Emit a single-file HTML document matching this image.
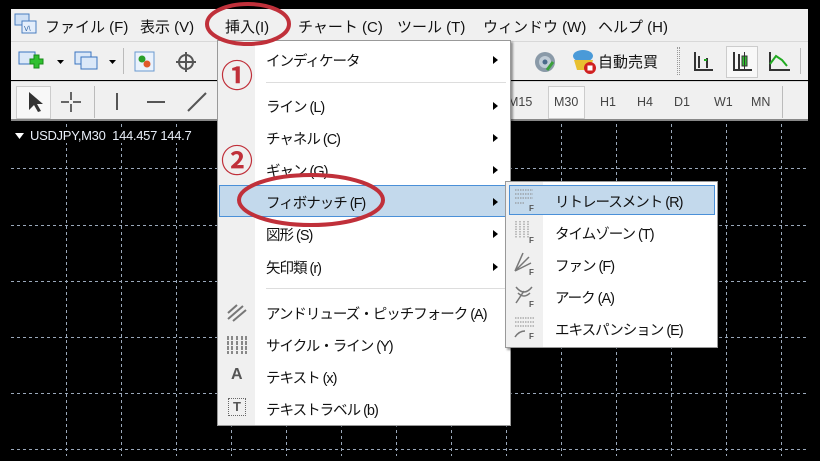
<!DOCTYPE html>
<html><head><meta charset="utf-8">
<style>
*{margin:0;padding:0;box-sizing:border-box}
body{width:820px;height:461px;background:#000;position:relative;overflow:hidden;font-family:"Liberation Sans","Noto Sans CJK JP",sans-serif;color:#111}
.a{position:absolute}
.mb{left:11px;top:9px;width:797px;height:32px;background:#f0f0f0}
.mb span{position:absolute;top:7px;font-size:15px}
.tb{left:11px;width:797px;background:#f0f0f0;border-top:1px solid #d8d8d8}
.chart{left:11px;top:124px;width:797px;height:332px;background:#000;overflow:hidden}
.menu{left:217px;top:40px;width:294px;height:386px;background:#fff;border:1px solid #999;box-shadow:2px 2px 2px rgba(0,0,0,.4)}
.col{left:0;top:0;width:37px;height:100%;background:#f0f0f0}
.it{position:absolute;left:48px;font-size:14.5px;letter-spacing:-1px;white-space:nowrap}
.ar{position:absolute;left:275px;width:0;height:0;border-left:5px solid #000;border-top:4px solid transparent;border-bottom:4px solid transparent}
.hl{position:absolute;background:#c3d9ec;border:1px solid #4a90d8}
.sub{left:505px;top:181px;width:213px;height:167px;background:#fff;border:1px solid #999;box-shadow:2px 2px 2px rgba(0,0,0,.4)}
.si{position:absolute;left:49px;font-size:14.5px;letter-spacing:-1px;white-space:nowrap}
.tf{position:absolute;top:95px;font-size:12.5px;color:#444}
.num{position:absolute;font-size:32px;color:#c0303a;font-weight:bold;line-height:1}
</style></head><body>
<div class="a mb">
<svg class="a" style="left:3px;top:3px" width="26" height="24"><rect x="1" y="2" width="14" height="11" fill="#cfe0f5" stroke="#4a7ec0"/><rect x="8" y="9" width="14" height="12" fill="#e4eefb" stroke="#4a7ec0"/><text x="10" y="19" font-size="7" fill="#2a5fa0">V\</text></svg>
<span style="left:34px">ファイル (F)</span>
<span style="left:129px">表示 (V)</span>
<span style="left:214px">挿入(I)</span>
<span style="left:287px">チャート (C)</span>
<span style="left:386px">ツール (T)</span>
<span style="left:472px">ウィンドウ (W)</span>
<span style="left:587px">ヘルプ (H)</span>
</div>
<div class="a tb" style="top:41px;height:39px">
<svg class="a" style="left:6px;top:8px" width="50" height="24"><rect x="2" y="2" width="16" height="12" fill="#dbe8f8" stroke="#3a74c0"/><path d="M13 9h4V5h5v4h4v5h-4v4h-5v-4h-4z" fill="#2fc02f" stroke="#178a17"/><path d="M40 10h7l-3.5 4z" fill="#000"/></svg>
<svg class="a" style="left:62px;top:8px" width="50" height="24"><rect x="2" y="2" width="16" height="12" fill="#dbe8f8" stroke="#3a74c0"/><rect x="8" y="7" width="16" height="12" fill="#dbe8f8" stroke="#3a74c0"/><path d="M36 10h7l-3.5 4z" fill="#000"/></svg>
<div class="a" style="left:112px;top:6px;width:1px;height:26px;background:#bbb"></div>
<svg class="a" style="left:122px;top:8px" width="24" height="24"><rect x="2" y="2" width="19" height="19" fill="#eaf2fc" stroke="#6a9ad0"/><circle cx="9" cy="9" r="3.5" fill="#2aa02a"/><circle cx="14" cy="14" r="3.5" fill="#e05a2a"/></svg>
<svg class="a" style="left:163px;top:8px" width="24" height="24"><circle cx="12" cy="12" r="7" fill="none" stroke="#555" stroke-width="2"/><path d="M12 2v20M2 12h20" stroke="#555" stroke-width="2"/></svg>
<svg class="a" style="left:522px;top:8px" width="24" height="24"><circle cx="12" cy="12" r="10" fill="#8a9aa8"/><circle cx="12" cy="12" r="6" fill="#c0ccd6"/><circle cx="12" cy="12" r="2.5" fill="#4a6a8a"/><path d="M14 20l6-8" stroke="#3aa03a" stroke-width="3"/></svg>
<svg class="a" style="left:560px;top:6px" width="26" height="28"><ellipse cx="12" cy="8" rx="10" ry="6" fill="#4a9ad8"/><path d="M3 12h19l-3 10H6z" fill="#e8c030"/><circle cx="19" cy="20" r="6" fill="#d02020"/><rect x="16.5" y="17.5" width="5" height="5" fill="#fff"/></svg>
<span class="a" style="left:587px;top:9px;font-size:15px">自動売買</span>
<div class="a" style="left:666px;top:5px;width:3px;height:28px;border-left:1px dotted #999;border-right:1px dotted #999"></div>
<svg class="a" style="left:680px;top:8px" width="24" height="24"><path d="M4 2v18h18M8 6v12M16 8v10" stroke="#333" stroke-width="2" fill="none"/><path d="M16 10h-3" stroke="#2a2" stroke-width="2"/></svg>
<div class="a" style="left:715px;top:4px;width:32px;height:32px;background:#f8f8f8;border:1px solid #ccc"></div>
<svg class="a" style="left:719px;top:8px" width="24" height="24"><path d="M4 2v18h18M9 4v16" stroke="#333" stroke-width="2" fill="none"/><rect x="12" y="6" width="5" height="10" fill="#2fc02f" stroke="#333"/><path d="M14.5 2v18" stroke="#333"/></svg>
<svg class="a" style="left:755px;top:8px" width="26" height="24"><path d="M4 2v18h20" stroke="#333" stroke-width="2" fill="none"/><path d="M4 14l6-8 6 4 5 6" stroke="#2a2" stroke-width="2" fill="none"/></svg>
<div class="a" style="left:789px;top:6px;width:1px;height:26px;background:#bbb"></div>
</div>
<div class="a tb" style="top:81px;height:40px;border-bottom:2px solid #888">
<div class="a" style="left:5px;top:4px;width:35px;height:33px;background:#f8f8f8;border:1px solid #ccc"></div>
<svg class="a" style="left:12px;top:8px" width="24" height="24"><path d="M6 2v18l5-5 4 7 3-1-4-7h6z" fill="#333"/></svg>
<svg class="a" style="left:48px;top:8px" width="24" height="24"><path d="M12 2v8M12 14v8M2 12h8M14 12h8" stroke="#666" stroke-width="2"/></svg>
<div class="a" style="left:83px;top:4px;width:1px;height:32px;background:#bbb"></div>
<div class="a" style="left:105px;top:11px;width:2px;height:17px;background:#555"></div>
<div class="a" style="left:136px;top:19px;width:18px;height:2px;background:#555"></div>
<svg class="a" style="left:174px;top:8px" width="24" height="24"><path d="M3 21L21 3" stroke="#555" stroke-width="2"/></svg>
<span class="tf" style="left:497px;top:13px">M15</span>
<div class="a" style="left:537px;top:4px;width:37px;height:33px;background:#f8f8f8;border:1px solid #ccc"></div>
<span class="tf" style="left:543px;top:13px">M30</span>
<span class="tf" style="left:589px;top:13px">H1</span>
<span class="tf" style="left:626px;top:13px">H4</span>
<span class="tf" style="left:663px;top:13px">D1</span>
<span class="tf" style="left:703px;top:13px">W1</span>
<span class="tf" style="left:740px;top:13px">MN</span>
<div class="a" style="left:771px;top:4px;width:1px;height:32px;background:#bbb"></div>
</div>
<div class="a chart">
<svg width="797" height="332" style="position:absolute;left:0;top:0">
<g stroke="#9aa8ba" stroke-width="1" stroke-dasharray="3,3">
<path d="M0 44.5H797M0 101.5H797M0 157.5H797M0 213.5H797M0 269.5H797M0 325.5H797"/>
<path d="M55.5 0V332M110.5 0V332M165.5 0V332M220.5 0V332M275.5 0V332M330.5 0V332M385.5 0V332M440.5 0V332M495.5 0V332M550.5 0V332M605.5 0V332M660.5 0V332M715.5 0V332M770.5 0V332"/>
</g>
</svg>
<svg class="a" style="left:4px;top:8px" width="10" height="8"><path d="M0 1h9L4.5 7z" fill="#fff"/></svg>
<span class="a" style="left:19px;top:4px;font-size:13px;letter-spacing:-0.3px;color:#e8eef8;background:#000">USDJPY,M30 &nbsp;144.457 144.7</span>
</div>
<div class="a menu">
<div class="a col"></div>
<div class="it" style="top:9px">インディケータ</div><div class="ar" style="top:15px"></div>
<div class="a" style="left:48px;top:41px;width:240px;height:1px;background:#ddd"></div>
<div class="it" style="top:55px">ライン (L)</div><div class="ar" style="top:61px"></div>
<div class="it" style="top:87px">チャネル (C)</div><div class="ar" style="top:93px"></div>
<div class="it" style="top:119px">ギャン (G)</div><div class="ar" style="top:125px"></div>
<div class="hl" style="left:1px;top:144px;width:290px;height:32px"></div>
<div class="it" style="top:151px">フィボナッチ (F)</div><div class="ar" style="top:157px"></div>
<div class="it" style="top:183px">図形 (S)</div><div class="ar" style="top:189px"></div>
<div class="it" style="top:216px">矢印類 (r)</div><div class="ar" style="top:222px"></div>
<div class="a" style="left:48px;top:247px;width:240px;height:1px;background:#ddd"></div>
<svg class="a" style="left:8px;top:262px" width="22" height="20"><path d="M2 10L11 2M2 16L17 3M7 18L20 7" stroke="#777" stroke-width="2"/></svg>
<div class="it" style="top:262px">アンドリューズ・ピッチフォーク (A)</div>
<svg class="a" style="left:8px;top:294px" width="22" height="20"><path d="M2 1v18M6 1v18M11 1v18M16 1v18M20 1v18" stroke="#666" stroke-width="1.5" stroke-dasharray="4,1"/></svg>
<div class="it" style="top:294px">サイクル・ライン (Y)</div>
<div class="a" style="left:13px;top:325px;font-size:16px;font-weight:bold;color:#555">A</div>
<div class="it" style="top:326px">テキスト (x)</div>
<div class="a" style="left:10px;top:357px;width:18px;height:18px;border:1px dotted #666;font-size:13px;font-weight:bold;color:#555;text-align:center;line-height:16px">T</div>
<div class="it" style="top:358px">テキストラベル (b)</div>
</div>
<div class="a sub">
<div class="a col" style="width:37px"></div>
<div class="hl" style="left:3px;top:3px;width:206px;height:30px"></div>
<svg class="a" style="left:7px;top:5px" width="26" height="26"><path d="M2 3h18M2 7h18M2 11h18M2 16h10" stroke="#888" stroke-dasharray="1.5,1"/><text x="16" y="24" font-size="8" font-weight="bold" fill="#555">F</text></svg>
<div class="si" style="top:9px">リトレースメント (R)</div>
<svg class="a" style="left:7px;top:37px" width="26" height="26"><path d="M3 2v17M7 2v17M11 2v17M15 2v17" stroke="#888" stroke-dasharray="1.5,1"/><text x="16" y="24" font-size="8" font-weight="bold" fill="#555">F</text></svg>
<div class="si" style="top:41px">タイムゾーン (T)</div>
<svg class="a" style="left:7px;top:69px" width="26" height="26"><path d="M2 20L10 2M2 20L16 6M2 20L18 12" stroke="#777" stroke-width="1.5"/><text x="16" y="24" font-size="8" font-weight="bold" fill="#555">F</text></svg>
<div class="si" style="top:73px">ファン (F)</div>
<svg class="a" style="left:7px;top:101px" width="26" height="26"><path d="M3 4q8 10 16 0M5 10q6 6 12 0M11 8l-8 12" stroke="#777" stroke-width="1.5" fill="none"/><text x="16" y="24" font-size="8" font-weight="bold" fill="#555">F</text></svg>
<div class="si" style="top:105px">アーク (A)</div>
<svg class="a" style="left:7px;top:133px" width="26" height="26"><path d="M2 3h20M2 7h20M2 11h20" stroke="#888" stroke-dasharray="1.5,1"/><path d="M2 22q4-6 10-6" stroke="#777" stroke-width="1.5" fill="none"/><text x="16" y="24" font-size="8" font-weight="bold" fill="#555">F</text></svg>
<div class="si" style="top:137px">エキスパンション (E)</div>
</div>
<div class="num" style="left:221px;top:60px">①</div>
<div class="num" style="left:221px;top:145px">②</div>
<svg class="a" style="left:0;top:0" width="820" height="461">
<ellipse cx="248" cy="24" rx="41" ry="20" fill="none" stroke="#c0303a" stroke-width="4"/>
<ellipse cx="311" cy="200" rx="72" ry="25" fill="none" stroke="#c0303a" stroke-width="4"/>
</svg>
</body></html>
